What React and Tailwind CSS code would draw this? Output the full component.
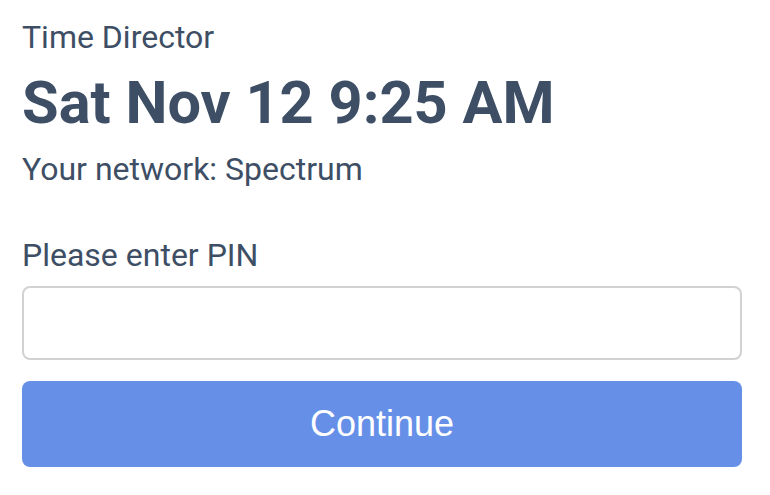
export default function App() {
  return (
    <div className="w-[770px] h-[495px] bg-white px-[22px] pt-[18px] text-[#3d4e65]" style={{ fontFamily: "Roboto, 'Noto Sans', sans-serif" }}>
      <div className="w-[720px] flex flex-col">
        <div className="text-[32px] leading-[38px]">Time Director</div>
        <div className="mt-[11px] text-[59.5px] leading-[72px] font-bold">Sat Nov 12 9:25 AM</div>
        <div className="mt-[11px] text-[32px] leading-[38px]">Your network: Spectrum</div>
        <label className="mt-[48px] text-[32px] leading-[38px]">Please enter PIN</label>
        <input
          type="text"
          className="mt-[12px] h-[74px] w-full rounded-[8px] border-2 border-[#d2d2d2] bg-white outline-none"
        />
        <button
          className="mt-[21px] h-[86px] w-full rounded-[8px] bg-[#6690e8] text-white text-[36px]"
          style={{ fontFamily: "'Liberation Sans', Arial, sans-serif" }}
        >
          Continue
        </button>
      </div>
    </div>
  );
}
